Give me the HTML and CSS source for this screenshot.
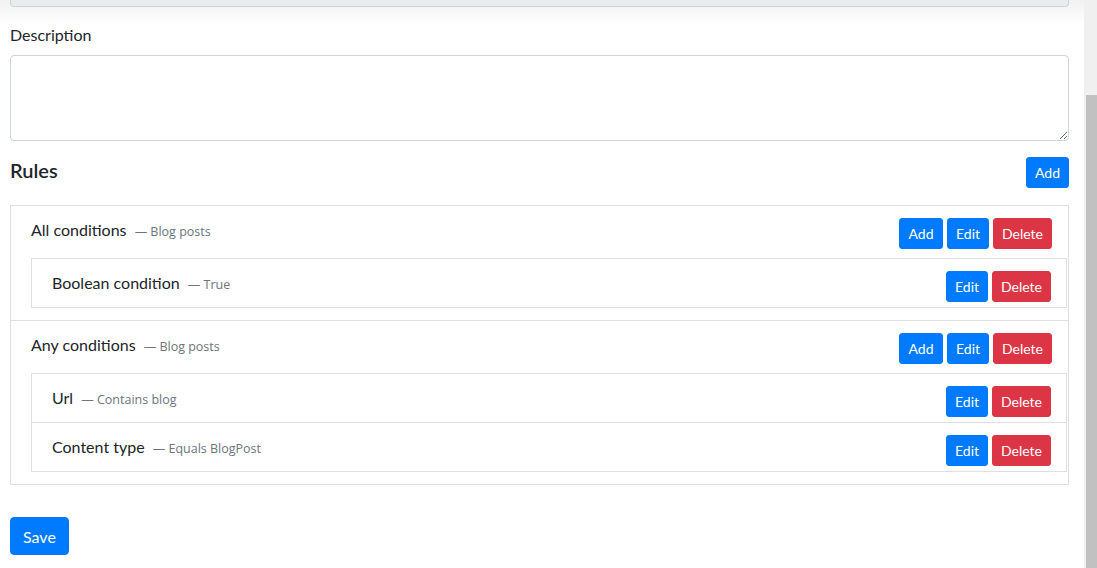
FILE: index.html
```html
<!DOCTYPE html>
<html lang="en">
<head>
    <meta charset="UTF-8">
    <meta name="viewport" content="width=device-width, initial-scale=1.0">
    <title>Edit Layer</title>
    <link rel="stylesheet" href="styles.css">
</head>
<body>

<div class="page">
    <div class="input-tail"></div>

    <label class="field-label" for="description">Description</label>
    <textarea id="description" class="form-control" rows="3"></textarea>

    <div class="rules-head">
        <h5>Rules</h5>
        <button class="btn btn-sm btn-primary">Add</button>
    </div>

    <ul class="rule-list">
        <li class="rule-group">
            <div class="rule-row">
                <span class="rule-name">All conditions <small>— Blog posts</small></span>
                <span class="actions">
                    <button class="btn btn-sm btn-primary">Add</button>
                    <button class="btn btn-sm btn-primary">Edit</button>
                    <button class="btn btn-sm btn-danger">Delete</button>
                </span>
            </div>
            <ul class="condition-list">
                <li class="condition">
                    <span class="rule-name">Boolean condition <small>— True</small></span>
                    <span class="actions">
                        <button class="btn btn-sm btn-primary">Edit</button>
                        <button class="btn btn-sm btn-danger">Delete</button>
                    </span>
                </li>
            </ul>
        </li>
        <li class="rule-group">
            <div class="rule-row">
                <span class="rule-name">Any conditions <small>— Blog posts</small></span>
                <span class="actions">
                    <button class="btn btn-sm btn-primary">Add</button>
                    <button class="btn btn-sm btn-primary">Edit</button>
                    <button class="btn btn-sm btn-danger">Delete</button>
                </span>
            </div>
            <ul class="condition-list">
                <li class="condition">
                    <span class="rule-name">Url <small>— Contains blog</small></span>
                    <span class="actions">
                        <button class="btn btn-sm btn-primary">Edit</button>
                        <button class="btn btn-sm btn-danger">Delete</button>
                    </span>
                </li>
                <li class="condition">
                    <span class="rule-name">Content type <small>— Equals BlogPost</small></span>
                    <span class="actions">
                        <button class="btn btn-sm btn-primary">Edit</button>
                        <button class="btn btn-sm btn-danger">Delete</button>
                    </span>
                </li>
            </ul>
        </li>
    </ul>

    <button class="btn btn-primary save">Save</button>
</div>

<div class="scrollbar"><div class="thumb"></div></div>

</body>
</html>
```

FILE: styles.css
```css
* {
    box-sizing: border-box;
}
body {
    margin: 0;
    font-family: Lato, "Open Sans", sans-serif;
    font-size: 16px;
    line-height: 24px;
    color: #212529;
    background: #fff;
    overflow: hidden;
}
.page {
    padding: 0 16px 0 10px;
    width: 1085px;
    height: 568px;
    background: linear-gradient(#f1f1f1 0, #fff 24px);
}
.input-tail {
    height: 7px;
    background: #e9ecef;
    border: 1px solid #ced4da;
    border-top: none;
    border-radius: 0 0 4px 4px;
}
.field-label {
    display: block;
    margin-top: 16px;
    margin-bottom: 8px;
}
.form-control {
    display: block;
    width: 100%;
    height: 86px;
    padding: 6px 12px;
    font: inherit;
    border: 1px solid #ced4da;
    border-radius: 4px;
    background: #fff;
}
.rules-head {
    display: flex;
    justify-content: space-between;
    align-items: flex-start;
    margin-top: 16px;
    margin-bottom: 17px;
}
.rules-head h5 {
    margin: 0;
    font-size: 20px;
    font-weight: 600;
    line-height: 24px;
    margin-top: 1px;
}
.rule-list,
.condition-list {
    list-style: none;
    margin: 0;
    padding: 0;
}
.rule-list {
    border: 1px solid #dfdfdf;
}
.rule-group {
    padding: 12px 16px 12px 20px;
}
.rule-group + .rule-group {
    border-top: 1px solid #dfdfdf;
}
.rule-row {
    display: flex;
    justify-content: space-between;
    align-items: flex-start;
    height: 31px;
    margin-bottom: 9px;
}
.condition-list {
    border: 1px solid #dfdfdf;
    margin-right: -15px;
}
.condition {
    display: flex;
    justify-content: space-between;
    align-items: flex-start;
    height: 48px;
    padding: 12px 15px 0 20px;
}
.condition + .condition {
    border-top: 1px solid #dfdfdf;
    height: 49px;
}
.rule-name small {
    margin-left: 4px;
    font-family: "Open Sans", sans-serif;
    font-size: 12.5px;
    color: #6c757d;
}
.actions {
    display: flex;
    gap: 4px;
}
.btn {
    font-family: inherit;
    color: #fff;
    border: 1px solid transparent;
    cursor: pointer;
}
.btn-sm {
    height: 31px;
    padding: 0 8px;
    font-size: 14px;
    line-height: 21px;
    border-radius: 3px;
}
.btn-primary {
    background: #007bff;
    border-color: #007bff;
}
.btn-danger {
    background: #dc3545;
    border-color: #dc3545;
}
.actions .btn-primary {
    min-width: 42px;
}
.actions .btn-primary:first-child:not(:last-child):nth-last-child(3) {
    min-width: 44px;
}
.actions .btn-danger {
    min-width: 58px;
}
.save {
    margin-top: 32px;
    height: 38px;
    padding: 0 12px;
    font-size: 16px;
    border-radius: 4px;
}
.scrollbar {
    position: fixed;
    top: 0;
    right: 0;
    width: 13px;
    height: 568px;
    background: #f0f0f0;
}
.thumb {
    position: absolute;
    top: 95px;
    right: 0;
    width: 11px;
    bottom: 0;
    background: #c1c1c1;
}
```
